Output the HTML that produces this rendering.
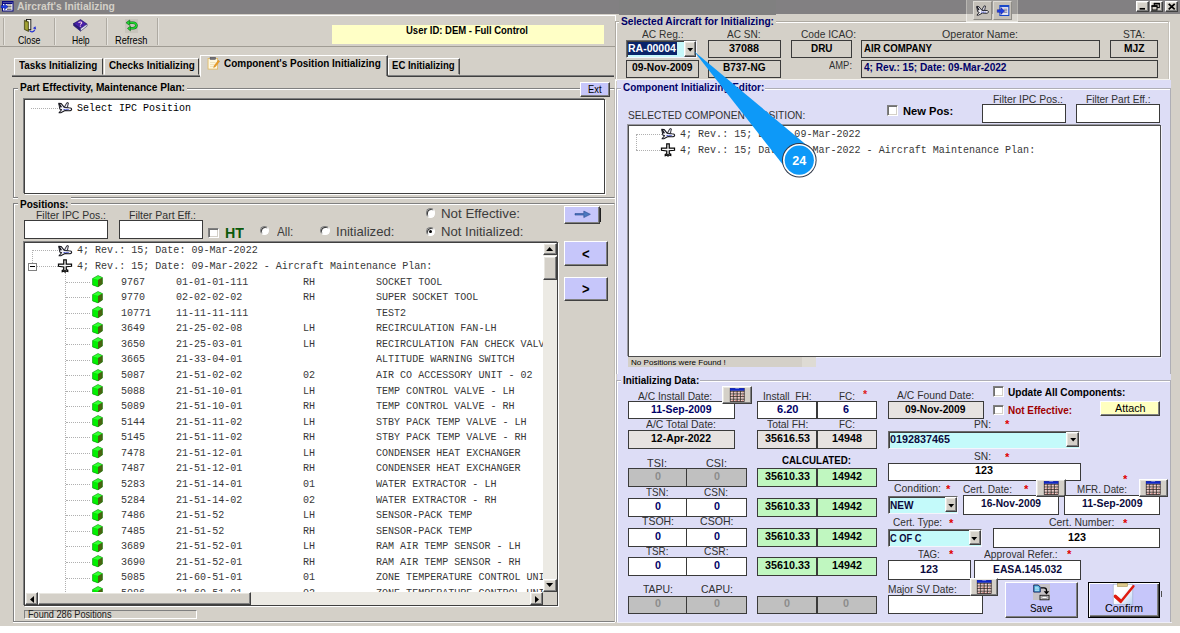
<!DOCTYPE html>
<html><head><meta charset="utf-8"><title>Aircraft's Initializing</title>
<style>
html,body{margin:0;padding:0;background:#fff;}
body{width:1180px;height:633px;overflow:hidden;position:relative;font-family:"Liberation Sans",sans-serif;font-size:10.2px;color:#000;}
#app{position:absolute;left:0;top:0;width:1180px;height:626.2px;background:#d4d0c8;overflow:hidden;}
.a{position:absolute;box-sizing:border-box;}
.t{position:absolute;white-space:pre;line-height:16px;height:16px;transform-origin:0 50%;}
.fld{border:1.2px solid #3a3a3a;}
.sunk{border:1px solid;border-color:#808080 #fff #fff #808080;}
.tree{background:#fff;border:1.3px solid #404040;box-shadow:-1px -1px 0 #808080, 1px 1px 0 #fff;}
.grp{border:1px solid #808080;box-shadow:1px 1px 0 #fff, inset 1px 1px 0 #fff;}
.btn{background:#c6c6fa;border:1px solid;border-color:#fff #404040 #404040 #fff;box-shadow:inset -1px -1px 0 #808080;}
.gbtn{background:#d4d0c8;border:1px solid;border-color:#fff #404040 #404040 #fff;box-shadow:inset -1px -1px 0 #808080, inset 1px 1px 0 #e8e6e0;}
.chk{background:#fff;border:1px solid;border-color:#808080 #fff #fff #808080;box-shadow:inset 1px 1px 0 #707070, inset -1px -1px 0 #d4d0c8;}
.rad{background:#fff;border-radius:50%;border:1px solid;border-color:#808080 #fff #fff #808080;box-shadow:inset 1px 1px 0 #404040;}
.dot{border-top:1px dotted #b0b0b0;height:0;}
.vdot{border-left:1px dotted #b0b0b0;width:0;}
svg{position:absolute;overflow:visible;}
.m{font-family:"Liberation Mono",monospace;font-size:10.04px;color:#383838;}
.cmb{border:1px solid;border-color:#6a6a6a #f4f4fc #f4f4fc #6a6a6a;box-shadow:inset 1px 1px 0 #404040;}

</style></head>
<body>
<div id="app">
<div class="a " style="left:0.0px;top:0.0px;width:1180.0px;height:14.2px;background:#828082;"></div>
<svg style="left:2px;top:1.3px" width="11.5" height="10.5" viewBox="0 0 23 21"><rect x="0" y="0" width="23" height="21" fill="#0a0a80"/><rect x="2" y="3" width="19" height="16" fill="#fff"/><rect x="2" y="3" width="19" height="3" fill="#0a0a80"/><path d="M10 8h9M10 11h9M10 14h9M10 17h9" stroke="#333" stroke-width="1.3"/><path d="M-2 9h7V5l7 6.5-7 6.5v-4h-7z" fill="#2040e0" stroke="#0a0a80" stroke-width="0.8"/></svg>
<div class="a gbtn" style="left:1136.2px;top:1.4px;width:12.6px;height:10.8px;"></div>
<div class="a gbtn" style="left:1149.8px;top:1.4px;width:12.8px;height:10.8px;"></div>
<div class="a gbtn" style="left:1165.4px;top:1.4px;width:12.9px;height:10.8px;"></div>
<svg style="left:1136.2px;top:1.4px" width="42" height="10.8" viewBox="0 0 42 10.8"><path d="M3.600 7.800h5.400" stroke="#000" stroke-width="1.700"/><rect x="18.300" y="2.400" width="5" height="4.200" fill="#d4d0c8" stroke="#000" stroke-width="1"/><path d="M17.800 2.700h6" stroke="#000" stroke-width="1.600"/><rect x="16" y="4.800" width="5" height="4.200" fill="#d4d0c8" stroke="#000" stroke-width="1"/><path d="M15.500 5.100h6" stroke="#000" stroke-width="1.600"/><path d="M32.700 2.800l6 5.600M38.700 2.800l-6 5.600" stroke="#000" stroke-width="1.700"/></svg>
<div class="a " style="left:0.0px;top:14.5px;width:614.5px;height:32.5px;background:#d4d0c8;border-top:1px solid #fff;border-bottom:1px solid #fff;"></div>
<div class="a " style="left:0.0px;top:45.6px;width:614.5px;height:1.0px;background:#a09c94;"></div>
<div class="a " style="left:3.2px;top:18.0px;width:1.0px;height:27.0px;background:#aeaaa2;"></div>
<div class="a " style="left:4.2px;top:18.0px;width:1.0px;height:27.0px;background:#e6e4df;"></div>
<div class="a " style="left:54.4px;top:18.0px;width:1.0px;height:27.0px;background:#aeaaa2;"></div>
<div class="a " style="left:55.4px;top:18.0px;width:1.0px;height:27.0px;background:#e6e4df;"></div>
<div class="a " style="left:105.8px;top:18.0px;width:1.0px;height:27.0px;background:#aeaaa2;"></div>
<div class="a " style="left:106.8px;top:18.0px;width:1.0px;height:27.0px;background:#e6e4df;"></div>
<div class="a " style="left:157.1px;top:18.0px;width:1.0px;height:27.0px;background:#aeaaa2;"></div>
<div class="a " style="left:158.1px;top:18.0px;width:1.0px;height:27.0px;background:#e6e4df;"></div>
<svg style="left:23.8px;top:18.9px" width="12.2" height="14.3" viewBox="0 0 25 29"><rect x="5" y="0.800" width="9" height="21" fill="#f8f8f0" stroke="#101010" stroke-width="1.800"/><path d="M0.800 2.500l8.500 3v20L0.800 21.500z" fill="#7c7c18" stroke="#2c2c08" stroke-width="1.200"/><path d="M2.500 5.500l5 2v15l-5-2z" fill="#a4a438"/><path d="M11.500 23.500c2.500 4 8.500 4 10.500-1.500" fill="none" stroke="#2430d0" stroke-width="2.400"/><path d="M18 19l5.500-4.500 1.500 7z" fill="#2430d0"/></svg>
<svg style="left:73px;top:19.3px" width="14.6" height="13.2" viewBox="0 0 29 26"><path d="M1 9L15 1l13 9-13 9z" fill="#4820a8" stroke="#18105c" stroke-width="1.2"/><path d="M1 9v4l14 11v-5z" fill="#2c1880" stroke="#18105c" stroke-width="1"/><path d="M15 19l13-9v4l-13 10z" fill="#e8e8f4" stroke="#18105c" stroke-width="1"/><path d="M11 7.5c1-2.5 6.5-2.5 6.5 0 0 2-2.600 2-2.800 3.800" fill="none" stroke="#ffd0e8" stroke-width="2"/><circle cx="14.600" cy="14" r="1.300" fill="#ffd0e8"/></svg>
<div class="a " style="left:124.7px;top:19.0px;width:13.6px;height:13.5px;background:#c8c4bc;"></div>
<svg style="left:125.3px;top:19.8px" width="12.4" height="11.4" viewBox="0 0 25 23"><path d="M8 5.5h8c5 0 7 3 7 5.500s-2 5.500-7 5.500h-5" fill="none" stroke="#106018" stroke-width="5.200" stroke-linecap="round"/><path d="M8 5.500h8c5 0 7 3 7 5.500s-2 5.500-7 5.500h-5" fill="none" stroke="#20d830" stroke-width="3" stroke-linecap="round"/><path d="M9.500 0L2 5.500l7.500 5.500z" fill="#20d830" stroke="#106018" stroke-width="1.200"/><path d="M11 12l-6 5 6 5z" fill="#20d830" stroke="#106018" stroke-width="1.200"/></svg>
<div class="a " style="left:331.7px;top:25.0px;width:272.3px;height:19.0px;background:#ffffc6;"></div>
<div class="a " style="left:12.2px;top:76.0px;width:602.3px;height:1.2px;background:#404040;"></div>
<div class="a " style="left:12.2px;top:75.0px;width:602.3px;height:1.0px;background:#808080;"></div>
<div class="a " style="left:14.2px;top:57.6px;width:89.2px;height:17.9px;background:#d4d0c8;border:1px solid;border-color:#fff #404040 transparent #fff;"></div>
<div class="a " style="left:103.6px;top:57.6px;width:95.9px;height:17.9px;background:#d4d0c8;border:1px solid;border-color:#fff #404040 transparent #fff;"></div>
<div class="a " style="left:388.0px;top:57.6px;width:71.5px;height:17.9px;background:#d4d0c8;border:1px solid;border-color:#fff #404040 transparent #fff;box-shadow:inset -1px 0 0 #808080"></div>
<div class="a " style="left:199.5px;top:55.3px;width:188.7px;height:22.1px;background:#d4d0c8;border:1px solid;border-color:#fff #404040 transparent #fff;box-shadow:inset -1px 0 0 #808080"></div>
<svg style="left:206.5px;top:57.2px" width="13.2" height="12.6" viewBox="0 0 26 25"><rect x="2" y="3" width="19" height="21" fill="#fff8e0" stroke="#e0b860" stroke-width="1.6"/><rect x="6" y="0.500" width="11" height="4.500" fill="#707078" stroke="#404048" stroke-width=".8"/><path d="M6 11h11M6 15h9M6 19h7" stroke="#e8d8a8" stroke-width="1.400"/><path d="M22.500 6.500l2.500 2-8.500 11-3.500 1.500 1-3.500z" fill="#f0a020" stroke="#c07818" stroke-width=".8"/></svg>
<div class="a " style="left:614.5px;top:15.0px;width:1.0px;height:607.0px;background:#fff;"></div>
<div class="a grp" style="left:12.6px;top:87.6px;width:602.2px;height:110.6px;border-right-color:#c0bcb4;box-shadow:0 1px 0 #fff, inset 1px 1px 0 #fff"></div>
<div class="a " style="left:17.5px;top:80.0px;width:169.0px;height:16.0px;background:#d4d0c8;"></div>
<div class="a tree" style="left:24.0px;top:99.4px;width:580.6px;height:94.3px;"></div>
<div class="a dot" style="left:31px;top:107.6px;width:27px"></div>
<svg style="left:57.5px;top:102px" width="14.2" height="11.4" viewBox="0 0 28 22"><path d="M1.500 2l4.500 .5 6.500 8 9 .5c4 0 5.500 1.500 5.500 3s-1.500 3-5.500 3l-7.500-.5-8.500 4.500-3.500 0 5-6-3.500-1.500z" fill="#f4f4fa" stroke="#181820" stroke-width="2" stroke-linejoin="round"/><path d="M12.500 10L17.500 1l3 .5-2 9.500z" fill="#e8e8f4" stroke="#181820" stroke-width="1.800" stroke-linejoin="round"/><path d="M2 2.500l4.500 8" stroke="#181820" stroke-width="3"/><path d="M11 14.500h11" stroke="#3848c8" stroke-width="2" stroke-dasharray="2.500 1.200"/></svg>
<div class="a btn" style="left:579.5px;top:81.5px;width:30.0px;height:15.5px;"></div>
<div class="a grp" style="left:12.6px;top:203.2px;width:602.2px;height:419.2px;border-right-color:#c0bcb4;box-shadow:inset 1px 1px 0 #fff, 0 1px 0 #fff;"></div>
<div class="a " style="left:17.5px;top:196.0px;width:53.5px;height:16.0px;background:#d4d0c8;"></div>
<div class="a fld" style="left:24.0px;top:220.0px;width:84.2px;height:18.5px;background:#fff;"></div>
<div class="a fld" style="left:118.5px;top:220.0px;width:84.7px;height:18.5px;background:#fff;"></div>
<div class="a chk" style="left:208.4px;top:227.8px;width:10.6px;height:10.6px;"></div>
<div class="a rad" style="left:259.8px;top:225.9px;width:9.6px;height:9.6px;"></div>
<div class="a rad" style="left:320.2px;top:225.9px;width:9.6px;height:9.6px;"></div>
<div class="a rad" style="left:425.9px;top:208.2px;width:9.6px;height:9.6px;"></div>
<div class="a rad" style="left:425.9px;top:226.6px;width:9.6px;height:9.6px;"></div>
<div class="a " style="left:429.1px;top:229.8px;width:3.2px;height:3.2px;background:#000;border-radius:50%"></div>
<div class="a btn" style="left:563.5px;top:206.0px;width:36.5px;height:18.0px;"></div>
<svg style="left:575.2px;top:211.3px" width="15.4" height="6.6" viewBox="0 0 14 6"><path d="M0 2.300h8V0L14 3 8 6V3.700H0z" fill="#4a78c0" stroke="#24448c" stroke-width=".5"/></svg>
<div class="a " style="left:600.2px;top:207.5px;width:1.2px;height:14.0px;background:#202020"></div>
<div class="a btn" style="left:563.5px;top:241.4px;width:44.5px;height:24.6px;"></div>
<div class="a btn" style="left:563.5px;top:277.0px;width:44.5px;height:24.4px;"></div>
<div class="a tree" style="left:24.0px;top:241.6px;width:533.6px;height:364.9px;"></div>
<div class="a " style="left:543.0px;top:242.6px;width:13.6px;height:349.6px;background:#eceae4;"></div>
<div class="a " style="left:25.0px;top:592.2px;width:518.0px;height:13.3px;background:#eceae4;"></div>
<div class="a " style="left:543.0px;top:592.2px;width:13.6px;height:13.3px;background:#d4d0c8;"></div>
<div class="a gbtn" style="left:543.0px;top:242.6px;width:13.6px;height:12.8px;"></div>
<div class="a gbtn" style="left:543.0px;top:255.6px;width:13.6px;height:24.2px;"></div>
<div class="a gbtn" style="left:543.0px;top:578.7px;width:13.6px;height:13.3px;"></div>
<div class="a gbtn" style="left:25.0px;top:592.2px;width:13.0px;height:13.3px;"></div>
<div class="a gbtn" style="left:38.0px;top:592.2px;width:212.6px;height:13.3px;"></div>
<div class="a gbtn" style="left:529.5px;top:592.2px;width:13.5px;height:13.3px;"></div>
<svg style="left:545.8px;top:246.8px" width="7.2" height="4" viewBox="0 0 7 4"><path d="M0 4h7L3.5 0z" fill="#000"/></svg>
<svg style="left:545.8px;top:583.3px" width="7.2" height="4" viewBox="0 0 7 4"><path d="M0 0h7L3.5 4z" fill="#000"/></svg>
<svg style="left:29.5px;top:595.5px" width="4" height="7" viewBox="0 0 4 7"><path d="M4 0v7L0 3.5z" fill="#000"/></svg>
<svg style="left:534.5px;top:595.5px" width="4" height="7" viewBox="0 0 4 7"><path d="M0 0v7L4 3.5z" fill="#000"/></svg>
<div class="a" style="left:25.3px;top:242.9px;width:517.7px;height:349.30000000000007px;overflow:hidden"><div class="a dot" style="left:6.699999999999999px;top:6.699999999999989px;width:26px"></div><div class="a vdot" style="left:6.699999999999999px;top:6.699999999999989px;height:13.5px"></div><div class="a dot" style="left:11.2px;top:23.299999999999983px;width:21.5px"></div><div class="a vdot" style="left:40.0px;top:29.099999999999994px;height:330px"></div><div class="a" style="left:3.0px;top:19.700000000000017px;width:8.3px;height:8.3px;border:1px solid #808080;background:#fff"></div><div class="a" style="left:5.099999999999998px;top:23.299999999999983px;width:4.2px;height:1px;background:#000"></div><svg style="left:32.5px;top:1.6999999999999886px" width="14.2" height="11.4" viewBox="0 0 28 22"><path d="M1.500 2l4.500 .5 6.500 8 9 .5c4 0 5.500 1.500 5.500 3s-1.500 3-5.500 3l-7.500-.5-8.500 4.500-3.500 0 5-6-3.500-1.500z" fill="#f4f4fa" stroke="#181820" stroke-width="2" stroke-linejoin="round"/><path d="M12.500 10L17.500 1l3 .5-2 9.500z" fill="#e8e8f4" stroke="#181820" stroke-width="1.800" stroke-linejoin="round"/><path d="M2 2.500l4.500 8" stroke="#181820" stroke-width="3"/><path d="M11 14.500h11" stroke="#3848c8" stroke-width="2" stroke-dasharray="2.500 1.200"/></svg><svg style="left:32.7px;top:15.900000000000006px" width="14" height="14" viewBox="0 0 28 28"><path d="M11.500 1.500h5v8.500l10.500 0 0 4.500-10.500 1v5.500l3 1.500v2.500L14 24l-5.500 1.500v-2.500l3-1.500v-5.500L1 14.500 1 10l10.500 0z" fill="#fafafa" stroke="#080808" stroke-width="2.500" stroke-linejoin="miter"/><path d="M14 22v5.500" stroke="#080808" stroke-width="2.400"/></svg><span class="t m" style="left:51.7px;top:0.6px;transform:scaleX(1.0005)">4; Rev.: 15; Date: 09-Mar-2022</span><span class="t m" style="left:51.7px;top:16.2px;transform:scaleX(1.0005)">4; Rev.: 15; Date: 09-Mar-2022 - Aircraft Maintenance Plan:</span><div class="a dot" style="left:40.7px;top:38.9px;width:24.5px"></div><svg style="left:66.7px;top:32.2px" width="11" height="12.4" viewBox="0 0 22 25"><path d="M1 7l11-6 9 4v13l-9 6-11-4z" fill="#08e808" /><path d="M1 7l11-6 9 4-9 5z" fill="#30ff30"/><path d="M12 10l9-5v13l-9 6z" fill="#4a6410"/><path d="M1 7l11 3v14l-11-4z" fill="#00f000"/><path d="M1 7l11-6 9 4v13l-9 6-11-4z" fill="none" stroke="#206020" stroke-width="0.8"/></svg><span class="t m" style="left:95.9px;top:31.7px;transform:scaleX(1.0005)">9767</span><span class="t m" style="left:150.7px;top:31.7px;transform:scaleX(1.0005)">01-01-01-111</span><span class="t m" style="left:277.7px;top:31.7px;transform:scaleX(1.0005)">RH</span><span class="t m" style="left:350.3px;top:31.7px;transform:scaleX(1.0005)">SOCKET TOOL</span><div class="a dot" style="left:40.7px;top:54.5px;width:24.5px"></div><svg style="left:66.7px;top:47.8px" width="11" height="12.4" viewBox="0 0 22 25"><path d="M1 7l11-6 9 4v13l-9 6-11-4z" fill="#08e808" /><path d="M1 7l11-6 9 4-9 5z" fill="#30ff30"/><path d="M12 10l9-5v13l-9 6z" fill="#4a6410"/><path d="M1 7l11 3v14l-11-4z" fill="#00f000"/><path d="M1 7l11-6 9 4v13l-9 6-11-4z" fill="none" stroke="#206020" stroke-width="0.8"/></svg><span class="t m" style="left:95.9px;top:47.3px;transform:scaleX(1.0005)">9770</span><span class="t m" style="left:150.7px;top:47.3px;transform:scaleX(1.0005)">02-02-02-02</span><span class="t m" style="left:277.7px;top:47.3px;transform:scaleX(1.0005)">RH</span><span class="t m" style="left:350.3px;top:47.3px;transform:scaleX(1.0005)">SUPER SOCKET TOOL</span><div class="a dot" style="left:40.7px;top:70.1px;width:24.5px"></div><svg style="left:66.7px;top:63.4px" width="11" height="12.4" viewBox="0 0 22 25"><path d="M1 7l11-6 9 4v13l-9 6-11-4z" fill="#08e808" /><path d="M1 7l11-6 9 4-9 5z" fill="#30ff30"/><path d="M12 10l9-5v13l-9 6z" fill="#4a6410"/><path d="M1 7l11 3v14l-11-4z" fill="#00f000"/><path d="M1 7l11-6 9 4v13l-9 6-11-4z" fill="none" stroke="#206020" stroke-width="0.8"/></svg><span class="t m" style="left:95.9px;top:62.9px;transform:scaleX(1.0005)">10771</span><span class="t m" style="left:150.7px;top:62.9px;transform:scaleX(1.0005)">11-11-11-111</span><span class="t m" style="left:350.3px;top:62.9px;transform:scaleX(1.0005)">TEST2</span><div class="a dot" style="left:40.7px;top:85.6px;width:24.5px"></div><svg style="left:66.7px;top:78.9px" width="11" height="12.4" viewBox="0 0 22 25"><path d="M1 7l11-6 9 4v13l-9 6-11-4z" fill="#08e808" /><path d="M1 7l11-6 9 4-9 5z" fill="#30ff30"/><path d="M12 10l9-5v13l-9 6z" fill="#4a6410"/><path d="M1 7l11 3v14l-11-4z" fill="#00f000"/><path d="M1 7l11-6 9 4v13l-9 6-11-4z" fill="none" stroke="#206020" stroke-width="0.8"/></svg><span class="t m" style="left:95.9px;top:78.4px;transform:scaleX(1.0005)">3649</span><span class="t m" style="left:150.7px;top:78.4px;transform:scaleX(1.0005)">21-25-02-08</span><span class="t m" style="left:277.7px;top:78.4px;transform:scaleX(1.0005)">LH</span><span class="t m" style="left:350.3px;top:78.4px;transform:scaleX(1.0005)">RECIRCULATION FAN-LH</span><div class="a dot" style="left:40.7px;top:101.2px;width:24.5px"></div><svg style="left:66.7px;top:94.5px" width="11" height="12.4" viewBox="0 0 22 25"><path d="M1 7l11-6 9 4v13l-9 6-11-4z" fill="#08e808" /><path d="M1 7l11-6 9 4-9 5z" fill="#30ff30"/><path d="M12 10l9-5v13l-9 6z" fill="#4a6410"/><path d="M1 7l11 3v14l-11-4z" fill="#00f000"/><path d="M1 7l11-6 9 4v13l-9 6-11-4z" fill="none" stroke="#206020" stroke-width="0.8"/></svg><span class="t m" style="left:95.9px;top:94.0px;transform:scaleX(1.0005)">3650</span><span class="t m" style="left:150.7px;top:94.0px;transform:scaleX(1.0005)">21-25-03-01</span><span class="t m" style="left:277.7px;top:94.0px;transform:scaleX(1.0005)">LH</span><span class="t m" style="left:350.3px;top:94.0px;transform:scaleX(1.0005)">RECIRCULATION FAN CHECK VALVE</span><div class="a dot" style="left:40.7px;top:116.8px;width:24.5px"></div><svg style="left:66.7px;top:110.1px" width="11" height="12.4" viewBox="0 0 22 25"><path d="M1 7l11-6 9 4v13l-9 6-11-4z" fill="#08e808" /><path d="M1 7l11-6 9 4-9 5z" fill="#30ff30"/><path d="M12 10l9-5v13l-9 6z" fill="#4a6410"/><path d="M1 7l11 3v14l-11-4z" fill="#00f000"/><path d="M1 7l11-6 9 4v13l-9 6-11-4z" fill="none" stroke="#206020" stroke-width="0.8"/></svg><span class="t m" style="left:95.9px;top:109.6px;transform:scaleX(1.0005)">3665</span><span class="t m" style="left:150.7px;top:109.6px;transform:scaleX(1.0005)">21-33-04-01</span><span class="t m" style="left:350.3px;top:109.6px;transform:scaleX(1.0005)">ALTITUDE WARNING SWITCH</span><div class="a dot" style="left:40.7px;top:132.4px;width:24.5px"></div><svg style="left:66.7px;top:125.7px" width="11" height="12.4" viewBox="0 0 22 25"><path d="M1 7l11-6 9 4v13l-9 6-11-4z" fill="#08e808" /><path d="M1 7l11-6 9 4-9 5z" fill="#30ff30"/><path d="M12 10l9-5v13l-9 6z" fill="#4a6410"/><path d="M1 7l11 3v14l-11-4z" fill="#00f000"/><path d="M1 7l11-6 9 4v13l-9 6-11-4z" fill="none" stroke="#206020" stroke-width="0.8"/></svg><span class="t m" style="left:95.9px;top:125.2px;transform:scaleX(1.0005)">5087</span><span class="t m" style="left:150.7px;top:125.2px;transform:scaleX(1.0005)">21-51-02-02</span><span class="t m" style="left:277.7px;top:125.2px;transform:scaleX(1.0005)">02</span><span class="t m" style="left:350.3px;top:125.2px;transform:scaleX(1.0005)">AIR CO ACCESSORY UNIT - 02</span><div class="a dot" style="left:40.7px;top:147.9px;width:24.5px"></div><svg style="left:66.7px;top:141.2px" width="11" height="12.4" viewBox="0 0 22 25"><path d="M1 7l11-6 9 4v13l-9 6-11-4z" fill="#08e808" /><path d="M1 7l11-6 9 4-9 5z" fill="#30ff30"/><path d="M12 10l9-5v13l-9 6z" fill="#4a6410"/><path d="M1 7l11 3v14l-11-4z" fill="#00f000"/><path d="M1 7l11-6 9 4v13l-9 6-11-4z" fill="none" stroke="#206020" stroke-width="0.8"/></svg><span class="t m" style="left:95.9px;top:140.7px;transform:scaleX(1.0005)">5088</span><span class="t m" style="left:150.7px;top:140.7px;transform:scaleX(1.0005)">21-51-10-01</span><span class="t m" style="left:277.7px;top:140.7px;transform:scaleX(1.0005)">LH</span><span class="t m" style="left:350.3px;top:140.7px;transform:scaleX(1.0005)">TEMP CONTROL VALVE - LH</span><div class="a dot" style="left:40.7px;top:163.5px;width:24.5px"></div><svg style="left:66.7px;top:156.8px" width="11" height="12.4" viewBox="0 0 22 25"><path d="M1 7l11-6 9 4v13l-9 6-11-4z" fill="#08e808" /><path d="M1 7l11-6 9 4-9 5z" fill="#30ff30"/><path d="M12 10l9-5v13l-9 6z" fill="#4a6410"/><path d="M1 7l11 3v14l-11-4z" fill="#00f000"/><path d="M1 7l11-6 9 4v13l-9 6-11-4z" fill="none" stroke="#206020" stroke-width="0.8"/></svg><span class="t m" style="left:95.9px;top:156.3px;transform:scaleX(1.0005)">5089</span><span class="t m" style="left:150.7px;top:156.3px;transform:scaleX(1.0005)">21-51-10-01</span><span class="t m" style="left:277.7px;top:156.3px;transform:scaleX(1.0005)">RH</span><span class="t m" style="left:350.3px;top:156.3px;transform:scaleX(1.0005)">TEMP CONTROL VALVE - RH</span><div class="a dot" style="left:40.7px;top:179.1px;width:24.5px"></div><svg style="left:66.7px;top:172.4px" width="11" height="12.4" viewBox="0 0 22 25"><path d="M1 7l11-6 9 4v13l-9 6-11-4z" fill="#08e808" /><path d="M1 7l11-6 9 4-9 5z" fill="#30ff30"/><path d="M12 10l9-5v13l-9 6z" fill="#4a6410"/><path d="M1 7l11 3v14l-11-4z" fill="#00f000"/><path d="M1 7l11-6 9 4v13l-9 6-11-4z" fill="none" stroke="#206020" stroke-width="0.8"/></svg><span class="t m" style="left:95.9px;top:171.9px;transform:scaleX(1.0005)">5144</span><span class="t m" style="left:150.7px;top:171.9px;transform:scaleX(1.0005)">21-51-11-02</span><span class="t m" style="left:277.7px;top:171.9px;transform:scaleX(1.0005)">LH</span><span class="t m" style="left:350.3px;top:171.9px;transform:scaleX(1.0005)">STBY PACK TEMP VALVE - LH</span><div class="a dot" style="left:40.7px;top:194.6px;width:24.5px"></div><svg style="left:66.7px;top:187.9px" width="11" height="12.4" viewBox="0 0 22 25"><path d="M1 7l11-6 9 4v13l-9 6-11-4z" fill="#08e808" /><path d="M1 7l11-6 9 4-9 5z" fill="#30ff30"/><path d="M12 10l9-5v13l-9 6z" fill="#4a6410"/><path d="M1 7l11 3v14l-11-4z" fill="#00f000"/><path d="M1 7l11-6 9 4v13l-9 6-11-4z" fill="none" stroke="#206020" stroke-width="0.8"/></svg><span class="t m" style="left:95.9px;top:187.4px;transform:scaleX(1.0005)">5145</span><span class="t m" style="left:150.7px;top:187.4px;transform:scaleX(1.0005)">21-51-11-02</span><span class="t m" style="left:277.7px;top:187.4px;transform:scaleX(1.0005)">RH</span><span class="t m" style="left:350.3px;top:187.4px;transform:scaleX(1.0005)">STBY PACK TEMP VALVE - RH</span><div class="a dot" style="left:40.7px;top:210.2px;width:24.5px"></div><svg style="left:66.7px;top:203.5px" width="11" height="12.4" viewBox="0 0 22 25"><path d="M1 7l11-6 9 4v13l-9 6-11-4z" fill="#08e808" /><path d="M1 7l11-6 9 4-9 5z" fill="#30ff30"/><path d="M12 10l9-5v13l-9 6z" fill="#4a6410"/><path d="M1 7l11 3v14l-11-4z" fill="#00f000"/><path d="M1 7l11-6 9 4v13l-9 6-11-4z" fill="none" stroke="#206020" stroke-width="0.8"/></svg><span class="t m" style="left:95.9px;top:203.0px;transform:scaleX(1.0005)">7478</span><span class="t m" style="left:150.7px;top:203.0px;transform:scaleX(1.0005)">21-51-12-01</span><span class="t m" style="left:277.7px;top:203.0px;transform:scaleX(1.0005)">LH</span><span class="t m" style="left:350.3px;top:203.0px;transform:scaleX(1.0005)">CONDENSER HEAT EXCHANGER</span><div class="a dot" style="left:40.7px;top:225.8px;width:24.5px"></div><svg style="left:66.7px;top:219.1px" width="11" height="12.4" viewBox="0 0 22 25"><path d="M1 7l11-6 9 4v13l-9 6-11-4z" fill="#08e808" /><path d="M1 7l11-6 9 4-9 5z" fill="#30ff30"/><path d="M12 10l9-5v13l-9 6z" fill="#4a6410"/><path d="M1 7l11 3v14l-11-4z" fill="#00f000"/><path d="M1 7l11-6 9 4v13l-9 6-11-4z" fill="none" stroke="#206020" stroke-width="0.8"/></svg><span class="t m" style="left:95.9px;top:218.6px;transform:scaleX(1.0005)">7487</span><span class="t m" style="left:150.7px;top:218.6px;transform:scaleX(1.0005)">21-51-12-01</span><span class="t m" style="left:277.7px;top:218.6px;transform:scaleX(1.0005)">RH</span><span class="t m" style="left:350.3px;top:218.6px;transform:scaleX(1.0005)">CONDENSER HEAT EXCHANGER</span><div class="a dot" style="left:40.7px;top:241.4px;width:24.5px"></div><svg style="left:66.7px;top:234.7px" width="11" height="12.4" viewBox="0 0 22 25"><path d="M1 7l11-6 9 4v13l-9 6-11-4z" fill="#08e808" /><path d="M1 7l11-6 9 4-9 5z" fill="#30ff30"/><path d="M12 10l9-5v13l-9 6z" fill="#4a6410"/><path d="M1 7l11 3v14l-11-4z" fill="#00f000"/><path d="M1 7l11-6 9 4v13l-9 6-11-4z" fill="none" stroke="#206020" stroke-width="0.8"/></svg><span class="t m" style="left:95.9px;top:234.2px;transform:scaleX(1.0005)">5283</span><span class="t m" style="left:150.7px;top:234.2px;transform:scaleX(1.0005)">21-51-14-01</span><span class="t m" style="left:277.7px;top:234.2px;transform:scaleX(1.0005)">01</span><span class="t m" style="left:350.3px;top:234.2px;transform:scaleX(1.0005)">WATER EXTRACTOR - LH</span><div class="a dot" style="left:40.7px;top:256.9px;width:24.5px"></div><svg style="left:66.7px;top:250.2px" width="11" height="12.4" viewBox="0 0 22 25"><path d="M1 7l11-6 9 4v13l-9 6-11-4z" fill="#08e808" /><path d="M1 7l11-6 9 4-9 5z" fill="#30ff30"/><path d="M12 10l9-5v13l-9 6z" fill="#4a6410"/><path d="M1 7l11 3v14l-11-4z" fill="#00f000"/><path d="M1 7l11-6 9 4v13l-9 6-11-4z" fill="none" stroke="#206020" stroke-width="0.8"/></svg><span class="t m" style="left:95.9px;top:249.7px;transform:scaleX(1.0005)">5284</span><span class="t m" style="left:150.7px;top:249.7px;transform:scaleX(1.0005)">21-51-14-02</span><span class="t m" style="left:277.7px;top:249.7px;transform:scaleX(1.0005)">02</span><span class="t m" style="left:350.3px;top:249.7px;transform:scaleX(1.0005)">WATER EXTRACTOR - RH</span><div class="a dot" style="left:40.7px;top:272.5px;width:24.5px"></div><svg style="left:66.7px;top:265.8px" width="11" height="12.4" viewBox="0 0 22 25"><path d="M1 7l11-6 9 4v13l-9 6-11-4z" fill="#08e808" /><path d="M1 7l11-6 9 4-9 5z" fill="#30ff30"/><path d="M12 10l9-5v13l-9 6z" fill="#4a6410"/><path d="M1 7l11 3v14l-11-4z" fill="#00f000"/><path d="M1 7l11-6 9 4v13l-9 6-11-4z" fill="none" stroke="#206020" stroke-width="0.8"/></svg><span class="t m" style="left:95.9px;top:265.3px;transform:scaleX(1.0005)">7486</span><span class="t m" style="left:150.7px;top:265.3px;transform:scaleX(1.0005)">21-51-52</span><span class="t m" style="left:277.7px;top:265.3px;transform:scaleX(1.0005)">LH</span><span class="t m" style="left:350.3px;top:265.3px;transform:scaleX(1.0005)">SENSOR-PACK TEMP</span><div class="a dot" style="left:40.7px;top:288.1px;width:24.5px"></div><svg style="left:66.7px;top:281.4px" width="11" height="12.4" viewBox="0 0 22 25"><path d="M1 7l11-6 9 4v13l-9 6-11-4z" fill="#08e808" /><path d="M1 7l11-6 9 4-9 5z" fill="#30ff30"/><path d="M12 10l9-5v13l-9 6z" fill="#4a6410"/><path d="M1 7l11 3v14l-11-4z" fill="#00f000"/><path d="M1 7l11-6 9 4v13l-9 6-11-4z" fill="none" stroke="#206020" stroke-width="0.8"/></svg><span class="t m" style="left:95.9px;top:280.9px;transform:scaleX(1.0005)">7485</span><span class="t m" style="left:150.7px;top:280.9px;transform:scaleX(1.0005)">21-51-52</span><span class="t m" style="left:277.7px;top:280.9px;transform:scaleX(1.0005)">RH</span><span class="t m" style="left:350.3px;top:280.9px;transform:scaleX(1.0005)">SENSOR-PACK TEMP</span><div class="a dot" style="left:40.7px;top:303.6px;width:24.5px"></div><svg style="left:66.7px;top:296.9px" width="11" height="12.4" viewBox="0 0 22 25"><path d="M1 7l11-6 9 4v13l-9 6-11-4z" fill="#08e808" /><path d="M1 7l11-6 9 4-9 5z" fill="#30ff30"/><path d="M12 10l9-5v13l-9 6z" fill="#4a6410"/><path d="M1 7l11 3v14l-11-4z" fill="#00f000"/><path d="M1 7l11-6 9 4v13l-9 6-11-4z" fill="none" stroke="#206020" stroke-width="0.8"/></svg><span class="t m" style="left:95.9px;top:296.4px;transform:scaleX(1.0005)">3689</span><span class="t m" style="left:150.7px;top:296.4px;transform:scaleX(1.0005)">21-51-52-01</span><span class="t m" style="left:277.7px;top:296.4px;transform:scaleX(1.0005)">LH</span><span class="t m" style="left:350.3px;top:296.4px;transform:scaleX(1.0005)">RAM AIR TEMP SENSOR - LH</span><div class="a dot" style="left:40.7px;top:319.2px;width:24.5px"></div><svg style="left:66.7px;top:312.5px" width="11" height="12.4" viewBox="0 0 22 25"><path d="M1 7l11-6 9 4v13l-9 6-11-4z" fill="#08e808" /><path d="M1 7l11-6 9 4-9 5z" fill="#30ff30"/><path d="M12 10l9-5v13l-9 6z" fill="#4a6410"/><path d="M1 7l11 3v14l-11-4z" fill="#00f000"/><path d="M1 7l11-6 9 4v13l-9 6-11-4z" fill="none" stroke="#206020" stroke-width="0.8"/></svg><span class="t m" style="left:95.9px;top:312.0px;transform:scaleX(1.0005)">3690</span><span class="t m" style="left:150.7px;top:312.0px;transform:scaleX(1.0005)">21-51-52-01</span><span class="t m" style="left:277.7px;top:312.0px;transform:scaleX(1.0005)">RH</span><span class="t m" style="left:350.3px;top:312.0px;transform:scaleX(1.0005)">RAM AIR TEMP SENSOR - RH</span><div class="a dot" style="left:40.7px;top:334.8px;width:24.5px"></div><svg style="left:66.7px;top:328.1px" width="11" height="12.4" viewBox="0 0 22 25"><path d="M1 7l11-6 9 4v13l-9 6-11-4z" fill="#08e808" /><path d="M1 7l11-6 9 4-9 5z" fill="#30ff30"/><path d="M12 10l9-5v13l-9 6z" fill="#4a6410"/><path d="M1 7l11 3v14l-11-4z" fill="#00f000"/><path d="M1 7l11-6 9 4v13l-9 6-11-4z" fill="none" stroke="#206020" stroke-width="0.8"/></svg><span class="t m" style="left:95.9px;top:327.6px;transform:scaleX(1.0005)">5085</span><span class="t m" style="left:150.7px;top:327.6px;transform:scaleX(1.0005)">21-60-51-01</span><span class="t m" style="left:277.7px;top:327.6px;transform:scaleX(1.0005)">01</span><span class="t m" style="left:350.3px;top:327.6px;transform:scaleX(1.0005)">ZONE TEMPERATURE CONTROL UNIT</span><div class="a dot" style="left:40.7px;top:350.3px;width:24.5px"></div><svg style="left:66.7px;top:343.6px" width="11" height="12.4" viewBox="0 0 22 25"><path d="M1 7l11-6 9 4v13l-9 6-11-4z" fill="#08e808" /><path d="M1 7l11-6 9 4-9 5z" fill="#30ff30"/><path d="M12 10l9-5v13l-9 6z" fill="#4a6410"/><path d="M1 7l11 3v14l-11-4z" fill="#00f000"/><path d="M1 7l11-6 9 4v13l-9 6-11-4z" fill="none" stroke="#206020" stroke-width="0.8"/></svg><span class="t m" style="left:95.9px;top:343.1px;transform:scaleX(1.0005)">5086</span><span class="t m" style="left:150.7px;top:343.1px;transform:scaleX(1.0005)">21-60-51-01</span><span class="t m" style="left:277.7px;top:343.1px;transform:scaleX(1.0005)">02</span><span class="t m" style="left:350.3px;top:343.1px;transform:scaleX(1.0005)">ZONE TEMPERATURE CONTROL UNIT</span></div>
<div class="a sunk" style="left:24.0px;top:609.6px;width:173.0px;height:9.6px;"></div>
<div class="a grp" style="left:614.5px;top:21.4px;width:554.5px;height:59.1px;border-bottom:none;border-color:#aeaaa2;border-right-color:#c4c0b8"></div>
<div class="a " style="left:619.0px;top:14.6px;width:157.0px;height:14.9px;background:#d4d0c8;"></div>
<div class="a " style="left:619.0px;top:0.0px;width:157.0px;height:14.5px;background:#808080;"></div>
<div class="a " style="left:965.7px;top:0.0px;width:51.9px;height:14.2px;background:#9c9a98;border-left:1px solid #b8b6b2;border-right:1px solid #b0aeaa;"></div>
<div class="a " style="left:965.7px;top:14.2px;width:51.9px;height:7.4px;background:#d8d5ce;border-left:1px solid #eceae6;border-right:1px solid #e4e2dc;border-bottom:1px solid #e8e6e0"></div>
<div class="a " style="left:973.4px;top:1.0px;width:18.6px;height:18.5px;background:#c4c0b8;border:1px solid;border-color:#dedcd6 #8e8c86 #8e8c86 #dedcd6"></div>
<div class="a " style="left:993.3px;top:1.0px;width:19.1px;height:18.5px;background:#c4c0b8;border:1px solid;border-color:#dedcd6 #8e8c86 #8e8c86 #dedcd6"></div>
<svg style="left:976px;top:5px" width="13" height="11" viewBox="0 0 28 22"><path d="M1.500 2l4.500 .5 6.500 8 9 .5c4 0 5.500 1.500 5.500 3s-1.500 3-5.500 3l-7.500-.5-8.500 4.500-3.500 0 5-6-3.500-1.500z" fill="#f4f4fa" stroke="#181820" stroke-width="2" stroke-linejoin="round"/><path d="M12.500 10L17.500 1l3 .5-2 9.500z" fill="#e8e8f4" stroke="#181820" stroke-width="1.800" stroke-linejoin="round"/><path d="M2 2.500l4.500 8" stroke="#181820" stroke-width="3"/><path d="M11 14.500h11" stroke="#3848c8" stroke-width="2" stroke-dasharray="2.500 1.200"/></svg>
<svg style="left:996.6px;top:5px" width="12.6" height="11" viewBox="0 0 23 21"><rect x="4" y="0" width="19" height="21" fill="#1848c8"/><rect x="6" y="4" width="15" height="15" fill="#e8e8f4"/><path d="M12 8h7M12 11h7M12 14h7" stroke="#557" stroke-width="1.3"/><path d="M0 9h7V5l7 6.5-7 6.5v-4H0z" fill="#2040e0" stroke="#0a0a80" stroke-width="0.8"/></svg>
<div class="a cmb" style="left:626.2px;top:40.0px;width:70.6px;height:18.0px;background:#c6f8fa;"></div>
<div class="a " style="left:627.6px;top:42.2px;width:49.2px;height:12.8px;background:#0a246a;"></div>
<div class="a gbtn" style="left:683.8px;top:41.2px;width:12.4px;height:15.6px;"></div>
<svg style="left:686.8px;top:47.8px" width="6.4" height="3.4" viewBox="0 0 7 4"><path d="M0 0h7L3.5 4z" fill="#000"/></svg>
<div class="a fld" style="left:708.3px;top:40.0px;width:72.4px;height:18.0px;background:#d4d0c8;"></div>
<div class="a fld" style="left:791.0px;top:40.0px;width:61.0px;height:18.0px;background:#d4d0c8;"></div>
<div class="a fld" style="left:861.0px;top:40.0px;width:238.6px;height:18.0px;background:#d4d0c8;"></div>
<div class="a fld" style="left:1110.0px;top:40.0px;width:48.2px;height:18.0px;background:#d4d0c8;"></div>
<div class="a fld" style="left:626.2px;top:60.2px;width:72.5px;height:18.0px;background:#d4d0c8;"></div>
<div class="a fld" style="left:708.3px;top:60.2px;width:72.4px;height:18.0px;background:#d4d0c8;"></div>
<div class="a fld" style="left:861.0px;top:60.2px;width:297.2px;height:18.0px;background:#d4d0c8;"></div>
<div class="a " style="left:617.0px;top:80.3px;width:554.0px;height:295.7px;background:#ddddf6;"></div>
<div class="a " style="left:614.5px;top:79.3px;width:555.5px;height:1.0px;background:#f4f2ee;"></div>
<div class="a " style="left:617.0px;top:376.0px;width:554.0px;height:246.0px;background:#ddddf6;"></div>
<div class="a grp" style="left:616.4px;top:88.0px;width:554.2px;height:286.0px;border-bottom:none;border-color:#aeaeb6;box-shadow:inset 1px 1px 0 #fff, 1px 0 0 #e4e2de"></div>
<div class="a " style="left:621.0px;top:81.0px;width:144.0px;height:15.0px;background:#ddddf6;"></div>
<div class="a chk" style="left:887.4px;top:105.2px;width:10.6px;height:10.6px;"></div>
<div class="a fld" style="left:981.7px;top:104.0px;width:84.1px;height:18.6px;background:#fff;"></div>
<div class="a fld" style="left:1075.8px;top:104.0px;width:84.7px;height:18.6px;background:#fff;"></div>
<div class="a tree" style="left:627.7px;top:125.2px;width:533.6px;height:231.8px;border-color:#4c4c4c;border-width:1px;box-shadow:-1px -1px 0 #9a9aa2, 1px 1px 0 #f0f0fa"></div>
<div class="a dot" style="left:635.5px;top:133.8px;width:26px"></div>
<div class="a vdot" style="left:635.5px;top:133.8px;height:16.5px"></div>
<div class="a dot" style="left:635.5px;top:150.2px;width:26px"></div>
<svg style="left:661px;top:128.3px" width="14.2" height="11.4" viewBox="0 0 28 22"><path d="M1.500 2l4.500 .5 6.500 8 9 .5c4 0 5.500 1.500 5.500 3s-1.500 3-5.500 3l-7.500-.5-8.500 4.500-3.500 0 5-6-3.500-1.500z" fill="#f4f4fa" stroke="#181820" stroke-width="2" stroke-linejoin="round"/><path d="M12.500 10L17.500 1l3 .5-2 9.500z" fill="#e8e8f4" stroke="#181820" stroke-width="1.800" stroke-linejoin="round"/><path d="M2 2.500l4.500 8" stroke="#181820" stroke-width="3"/><path d="M11 14.500h11" stroke="#3848c8" stroke-width="2" stroke-dasharray="2.500 1.200"/></svg>
<svg style="left:661.3px;top:142.7px" width="14" height="14" viewBox="0 0 28 28"><path d="M11.500 1.500h5v8.500l10.500 0 0 4.500-10.500 1v5.500l3 1.500v2.500L14 24l-5.500 1.500v-2.500l3-1.500v-5.500L1 14.500 1 10l10.500 0z" fill="#fafafa" stroke="#080808" stroke-width="2.500" stroke-linejoin="miter"/><path d="M14 22v5.500" stroke="#080808" stroke-width="2.400"/></svg>
<span class="t m" style="left:680px;top:127.29999999999998px">4; Rev.: 15; Date: 09-Mar-2022</span>
<span class="t m" style="left:680px;top:143.1px">4; Rev.: 15; Date: 09-Mar-2022 - Aircraft Maintenance Plan:</span>
<div class="a " style="left:627.7px;top:357.3px;width:174.1px;height:9.9px;background:#d4d0c8;"></div>
<div class="a " style="left:801.8px;top:357.3px;width:14.2px;height:9.9px;background:#dedbd4;"></div>
<div class="a grp" style="left:616.2px;top:380.0px;width:554.4px;height:241.5px;border-bottom:none;border-color:#aeaeb6;box-shadow:inset 1px 1px 0 #fff, 1px 0 0 #e4e2de"></div>
<div class="a " style="left:620.5px;top:372.0px;width:79.5px;height:16.0px;background:#ddddf6;"></div>
<div class="a fld" style="left:627.7px;top:401.4px;width:107.1px;height:18.1px;background:#fff;"></div>
<div class="a gbtn" style="left:722.3px;top:385.5px;width:29.5px;height:18.9px;"></div>
<svg style="left:729.6px;top:387.6px" width="14.4" height="13.800" viewBox="0 0 30 28"><rect x="0.500" y="0.500" width="29" height="27" fill="#fbf8f4" stroke="#281818" stroke-width="1.600"/><rect x="0" y="0" width="30" height="5.500" fill="#1028c8"/><rect x="11" y="0" width="8" height="1.600" fill="#8090e8"/><path d="M2 9.500h26M2 15h26M2 20.500h26M2 25.500h26" stroke="#d05048" stroke-width="2.200" stroke-dasharray="4.500 2.800" stroke-dashoffset="-1" opacity=".55"/><path d="M0 6.500h30M0 12h30M0 17.500h30M0 23h30M7.800 6v22M15 6v22M22.200 6v22" stroke="#30201c" stroke-width="1.700"/></svg>
<div class="a fld" style="left:757.4px;top:401.4px;width:60.1px;height:18.1px;background:#fff;"></div>
<div class="a fld" style="left:816.5px;top:401.4px;width:60.3px;height:18.1px;background:#fff;"></div>
<div class="a fld" style="left:627.7px;top:430.2px;width:107.1px;height:18.6px;background:#e6e2e0;"></div>
<div class="a fld" style="left:757.4px;top:430.2px;width:60.1px;height:18.6px;background:#e6e2e0;"></div>
<div class="a fld" style="left:816.5px;top:430.2px;width:60.3px;height:18.6px;background:#e6e2e0;"></div>
<div class="a fld" style="left:627.7px;top:468.4px;width:59.6px;height:18.3px;background:#c0c0c0;"></div>
<div class="a fld" style="left:686.3px;top:468.4px;width:60.3px;height:18.3px;background:#c0c0c0;"></div>
<div class="a fld" style="left:757.4px;top:468.4px;width:60.1px;height:18.3px;background:#c0f7c0;"></div>
<div class="a fld" style="left:816.5px;top:468.4px;width:60.3px;height:18.3px;background:#c0f7c0;"></div>
<div class="a fld" style="left:627.7px;top:498.0px;width:59.6px;height:18.7px;background:#fff;"></div>
<div class="a fld" style="left:686.3px;top:498.0px;width:60.3px;height:18.7px;background:#fff;"></div>
<div class="a fld" style="left:757.4px;top:498.0px;width:60.1px;height:18.7px;background:#c0f7c0;"></div>
<div class="a fld" style="left:816.5px;top:498.0px;width:60.3px;height:18.7px;background:#c0f7c0;"></div>
<div class="a fld" style="left:627.7px;top:528.4px;width:59.6px;height:18.3px;background:#fff;"></div>
<div class="a fld" style="left:686.3px;top:528.4px;width:60.3px;height:18.3px;background:#fff;"></div>
<div class="a fld" style="left:757.4px;top:528.4px;width:60.1px;height:18.3px;background:#c0f7c0;"></div>
<div class="a fld" style="left:816.5px;top:528.4px;width:60.3px;height:18.3px;background:#c0f7c0;"></div>
<div class="a fld" style="left:627.7px;top:556.7px;width:59.6px;height:18.9px;background:#fff;"></div>
<div class="a fld" style="left:686.3px;top:556.7px;width:60.3px;height:18.9px;background:#fff;"></div>
<div class="a fld" style="left:757.4px;top:556.7px;width:60.1px;height:18.9px;background:#c0f7c0;"></div>
<div class="a fld" style="left:816.5px;top:556.7px;width:60.3px;height:18.9px;background:#c0f7c0;"></div>
<div class="a fld" style="left:627.7px;top:595.5px;width:59.6px;height:18.3px;background:#c0c0c0;"></div>
<div class="a fld" style="left:686.3px;top:595.5px;width:60.3px;height:18.3px;background:#c0c0c0;"></div>
<div class="a fld" style="left:757.4px;top:595.5px;width:60.1px;height:18.3px;background:#c0c0c0;"></div>
<div class="a fld" style="left:816.5px;top:595.5px;width:60.3px;height:18.3px;background:#c0c0c0;"></div>
<div class="a fld" style="left:887.6px;top:401.0px;width:96.1px;height:18.2px;background:#e6e2e0;"></div>
<div class="a chk" style="left:993.0px;top:386.4px;width:10.6px;height:10.6px;"></div>
<div class="a chk" style="left:993.0px;top:404.6px;width:10.6px;height:10.6px;"></div>
<div class="a btn" style="left:1099.5px;top:401.3px;width:60.5px;height:14.7px;background:#ffffc0;"></div>
<div class="a cmb" style="left:887.6px;top:430.5px;width:192.6px;height:18.0px;background:#c4fafa;"></div>
<div class="a gbtn" style="left:1066.4px;top:431.8px;width:12.6px;height:15.4px;"></div>
<svg style="left:1069.5px;top:438.3px" width="6.4" height="3.4" viewBox="0 0 7 4"><path d="M0 0h7L3.5 4z" fill="#000"/></svg>
<div class="a fld" style="left:887.6px;top:462.7px;width:193.6px;height:18.0px;background:#fff;"></div>
<div class="a cmb" style="left:887.6px;top:495.8px;width:70.2px;height:18.0px;background:#c4fafa;"></div>
<div class="a gbtn" style="left:944.9px;top:497.1px;width:11.7px;height:15.4px;"></div>
<svg style="left:947.5px;top:503.6px" width="6.4" height="3.4" viewBox="0 0 7 4"><path d="M0 0h7L3.5 4z" fill="#000"/></svg>
<div class="a fld" style="left:962.6px;top:495.4px;width:96.4px;height:19.2px;background:#fff;"></div>
<div class="a gbtn" style="left:1036.4px;top:479.0px;width:29.2px;height:18.2px;"></div>
<svg style="left:1043.6px;top:480.8px" width="14.4" height="13.800" viewBox="0 0 30 28"><rect x="0.500" y="0.500" width="29" height="27" fill="#fbf8f4" stroke="#281818" stroke-width="1.600"/><rect x="0" y="0" width="30" height="5.500" fill="#1028c8"/><rect x="11" y="0" width="8" height="1.600" fill="#8090e8"/><path d="M2 9.500h26M2 15h26M2 20.500h26M2 25.500h26" stroke="#d05048" stroke-width="2.200" stroke-dasharray="4.500 2.800" stroke-dashoffset="-1" opacity=".55"/><path d="M0 6.500h30M0 12h30M0 17.500h30M0 23h30M7.800 6v22M15 6v22M22.200 6v22" stroke="#30201c" stroke-width="1.700"/></svg>
<div class="a fld" style="left:1064.4px;top:495.4px;width:95.5px;height:19.2px;background:#fff;"></div>
<div class="a gbtn" style="left:1138.6px;top:479.0px;width:29.3px;height:18.2px;"></div>
<svg style="left:1145.8px;top:480.8px" width="14.4" height="13.800" viewBox="0 0 30 28"><rect x="0.500" y="0.500" width="29" height="27" fill="#fbf8f4" stroke="#281818" stroke-width="1.600"/><rect x="0" y="0" width="30" height="5.500" fill="#1028c8"/><rect x="11" y="0" width="8" height="1.600" fill="#8090e8"/><path d="M2 9.500h26M2 15h26M2 20.500h26M2 25.500h26" stroke="#d05048" stroke-width="2.200" stroke-dasharray="4.500 2.800" stroke-dashoffset="-1" opacity=".55"/><path d="M0 6.500h30M0 12h30M0 17.500h30M0 23h30M7.800 6v22M15 6v22M22.200 6v22" stroke="#30201c" stroke-width="1.700"/></svg>
<div class="a cmb" style="left:887.6px;top:528.8px;width:94.3px;height:18.0px;background:#c4fafa;"></div>
<div class="a gbtn" style="left:968.5px;top:530.1px;width:12.2px;height:15.4px;"></div>
<svg style="left:971.4px;top:536.6px" width="6.4" height="3.4" viewBox="0 0 7 4"><path d="M0 0h7L3.5 4z" fill="#000"/></svg>
<div class="a fld" style="left:993.0px;top:528.0px;width:166.9px;height:19.7px;background:#fff;"></div>
<div class="a fld" style="left:887.6px;top:560.2px;width:83.4px;height:19.4px;background:#fff;"></div>
<div class="a fld" style="left:974.0px;top:560.2px;width:107.2px;height:19.4px;background:#fff;"></div>
<div class="a fld" style="left:887.6px;top:595.3px;width:95.6px;height:19.2px;background:#fff;"></div>
<div class="a gbtn" style="left:970.3px;top:577.5px;width:27.9px;height:18.5px;"></div>
<svg style="left:976.9px;top:579.5px" width="14.4" height="13.800" viewBox="0 0 30 28"><rect x="0.500" y="0.500" width="29" height="27" fill="#fbf8f4" stroke="#281818" stroke-width="1.600"/><rect x="0" y="0" width="30" height="5.500" fill="#1028c8"/><rect x="11" y="0" width="8" height="1.600" fill="#8090e8"/><path d="M2 9.500h26M2 15h26M2 20.500h26M2 25.500h26" stroke="#d05048" stroke-width="2.200" stroke-dasharray="4.500 2.800" stroke-dashoffset="-1" opacity=".55"/><path d="M0 6.500h30M0 12h30M0 17.500h30M0 23h30M7.800 6v22M15 6v22M22.200 6v22" stroke="#30201c" stroke-width="1.700"/></svg>
<div class="a btn" style="left:1005.4px;top:581.8px;width:72.6px;height:35.8px;"></div>
<div class="a btn" style="left:1088.0px;top:581.8px;width:72.4px;height:35.8px;outline:1px solid #000;outline-offset:-1px;border-color:#000;box-shadow:inset 1px 1px 0 #fff, inset -1px -1px 0 #404040, inset -2px -2px 0 #808080"></div>
<div class="a " style="left:1033.2px;top:583.5px;width:16.5px;height:16.1px;background:#c6c2c6;"></div>
<svg style="left:1033.2px;top:583.5px" width="16.5" height="16.1" viewBox="0 0 33 32"><path d="M1.500 2h9l4 4v10h-13z" fill="#58b8e0" stroke="#0c1c60" stroke-width="1.800"/><path d="M4 6.500h7M4 9.500h8M4 12.500h8" stroke="#d8f4ff" stroke-width="1.400"/><path d="M16 7.500h6c4 0 5 2 5 5v3" fill="none" stroke="#000" stroke-width="2.600"/><path d="M21.500 14.500h11L27 21z" fill="#000"/><rect x="14" y="22.500" width="18" height="9" fill="#d0ccd0" stroke="#181818" stroke-width="1.800"/><rect x="18" y="25" width="10" height="3.500" fill="#fff" stroke="#505050" stroke-width=".8"/></svg>
<svg style="left:1111px;top:581px" width="25" height="25" viewBox="0 0 25 25"><defs><linearGradient id="pg" x1="0" y1="0" x2="1" y2="1"><stop offset="0.450" stop-color="#ffffff"/><stop offset="1" stop-color="#b8d0f4"/></linearGradient></defs><rect x="2.200" y="3.200" width="19.600" height="20.200" fill="url(#pg)" stroke="#a0b0d0" stroke-width=".7"/><rect x="6.500" y="2.300" width="10" height="3.200" fill="#dcc88c" stroke="#a89458" stroke-width=".6"/><path d="M4.300 15.700l5.500 5L22.400 5.300" fill="none" stroke="#e01c10" stroke-width="2.500" stroke-linecap="round" stroke-linejoin="miter"/><path d="M4.300 15.200l5 4.600" fill="none" stroke="#e01c10" stroke-width="3.200" stroke-linecap="round"/></svg>
<div class="a " style="left:1161.3px;top:591.0px;width:0.9px;height:5.5px;background:#505050"></div>
<div class="a " style="left:1171.0px;top:81.0px;width:9.0px;height:541.0px;background:#d4d0c8;"></div>
<div class="a " style="left:617.0px;top:621.5px;width:555.0px;height:1.0px;background:#eeeef8;"></div>
<span class="t" style="left:17.4px;top:-0.7px;font-family:'Liberation Sans', sans-serif;font-weight:bold;font-size:10.4px;color:#d4d0c8;transform:scaleX(0.9900)">Aircraft&#x27;s Initializing</span>
<span class="t" style="left:17.6px;top:31.7px;font-family:'Liberation Sans', sans-serif;font-weight:normal;font-size:10.6px;color:#000;transform:scaleX(0.8268)">Close</span>
<span class="t" style="left:71.6px;top:31.7px;font-family:'Liberation Sans', sans-serif;font-weight:normal;font-size:10.6px;color:#000;transform:scaleX(0.8075)">Help</span>
<span class="t" style="left:114.6px;top:31.7px;font-family:'Liberation Sans', sans-serif;font-weight:normal;font-size:10.6px;color:#000;transform:scaleX(0.8762)">Refresh</span>
<span class="t" style="left:406.3px;top:23.2px;font-family:'Liberation Sans', sans-serif;font-weight:bold;font-size:10.2px;color:#000;transform:scaleX(0.9331)">User ID: DEM - Full Control</span>
<span class="t" style="left:19.3px;top:57.7px;font-family:'Liberation Sans', sans-serif;font-weight:bold;font-size:10.2px;color:#000;transform:scaleX(0.9695)">Tasks Initializing</span>
<span class="t" style="left:108.8px;top:57.7px;font-family:'Liberation Sans', sans-serif;font-weight:bold;font-size:10.2px;color:#000;transform:scaleX(0.9652)">Checks Initializing</span>
<span class="t" style="left:224.4px;top:55.9px;font-family:'Liberation Sans', sans-serif;font-weight:bold;font-size:10.2px;color:#000;transform:scaleX(0.9780)">Component&#x27;s Position Initializing</span>
<span class="t" style="left:391.5px;top:57.9px;font-family:'Liberation Sans', sans-serif;font-weight:bold;font-size:10.2px;color:#000;transform:scaleX(0.9387)">EC Initializing</span>
<span class="t" style="left:19.7px;top:79.7px;font-family:'Liberation Sans', sans-serif;font-weight:bold;font-size:10.4px;color:#000;transform:scaleX(0.9763)">Part Effectivity, Maintenance Plan:</span>
<span class="t" style="left:77.0px;top:100.9px;font-family:'Liberation Mono', monospace;font-weight:normal;font-size:10.1px;color:#000;transform:scaleX(0.9905)">Select IPC Position</span>
<span class="t" style="left:588.2px;top:81.6px;font-family:'Liberation Sans', sans-serif;font-weight:normal;font-size:10.4px;color:#000;transform:scaleX(0.8991)">Ext</span>
<span class="t" style="left:19.8px;top:197.0px;font-family:'Liberation Sans', sans-serif;font-weight:bold;font-size:10.4px;color:#000;transform:scaleX(0.9635)">Positions:</span>
<span class="t" style="left:35.6px;top:208.3px;font-family:'Liberation Sans', sans-serif;font-weight:normal;font-size:10.4px;color:#303030;transform:scaleX(1.0018)">Filter IPC Pos.:</span>
<span class="t" style="left:129.0px;top:208.3px;font-family:'Liberation Sans', sans-serif;font-weight:normal;font-size:10.4px;color:#303030;transform:scaleX(1.0118)">Filter Part Eff.:</span>
<span class="t" style="left:225.0px;top:225.2px;font-family:'Liberation Sans', sans-serif;font-weight:bold;font-size:15px;color:#0a5a0a;transform:scaleX(0.9500)">HT</span>
<span class="t" style="left:276.5px;top:224.3px;font-family:'Liberation Sans', sans-serif;font-weight:normal;font-size:13.2px;color:#3c3c3c;transform:scaleX(0.8893)">All:</span>
<span class="t" style="left:335.6px;top:224.3px;font-family:'Liberation Sans', sans-serif;font-weight:normal;font-size:13.2px;color:#3c3c3c;transform:scaleX(0.9956)">Initialized:</span>
<span class="t" style="left:441.0px;top:206.3px;font-family:'Liberation Sans', sans-serif;font-weight:normal;font-size:13.2px;color:#3c3c3c;transform:scaleX(1.0104)">Not Effective:</span>
<span class="t" style="left:441.0px;top:224.3px;font-family:'Liberation Sans', sans-serif;font-weight:normal;font-size:13.2px;color:#3c3c3c;transform:scaleX(0.9960)">Not Initialized:</span>
<span class="t" style="left:582.2px;top:245.7px;font-family:'Liberation Sans', sans-serif;font-weight:bold;font-size:14px;color:#000;transform:scaleX(0.9282)">&lt;</span>
<span class="t" style="left:582.2px;top:281.2px;font-family:'Liberation Sans', sans-serif;font-weight:bold;font-size:14px;color:#000;transform:scaleX(0.9282)">&gt;</span>
<span class="t" style="left:27.5px;top:606.5px;font-family:'Liberation Sans', sans-serif;font-weight:normal;font-size:10.2px;color:#202020;transform:scaleX(0.8989)">Found 286 Positions</span>
<span class="t" style="left:621.0px;top:13.9px;font-family:'Liberation Sans', sans-serif;font-weight:bold;font-size:10.4px;color:#000068;transform:scaleX(0.9803)">Selected Aircraft for Initializing:</span>
<span class="t" style="left:641.5px;top:26.5px;font-family:'Liberation Sans', sans-serif;font-weight:normal;font-size:10.4px;color:#303030;transform:scaleX(0.9844)">AC Reg.:</span>
<span class="t" style="left:727.0px;top:26.5px;font-family:'Liberation Sans', sans-serif;font-weight:normal;font-size:10.4px;color:#303030;transform:scaleX(0.9666)">AC SN:</span>
<span class="t" style="left:800.5px;top:26.5px;font-family:'Liberation Sans', sans-serif;font-weight:normal;font-size:10.4px;color:#303030;transform:scaleX(0.9816)">Code ICAO:</span>
<span class="t" style="left:942.0px;top:26.5px;font-family:'Liberation Sans', sans-serif;font-weight:normal;font-size:10.4px;color:#303030;transform:scaleX(1.0201)">Operator Name:</span>
<span class="t" style="left:1123.0px;top:26.5px;font-family:'Liberation Sans', sans-serif;font-weight:normal;font-size:10.4px;color:#303030;transform:scaleX(0.9853)">STA:</span>
<span class="t" style="left:828.5px;top:58.3px;font-family:'Liberation Sans', sans-serif;font-weight:normal;font-size:10.4px;color:#303030;transform:scaleX(0.9053)">AMP:</span>
<span class="t" style="left:627.6px;top:40.3px;font-family:'Liberation Sans', sans-serif;font-weight:bold;font-size:11px;color:#fff;transform:scaleX(0.9553)">RA-00004</span>
<span class="t" style="left:729.0px;top:39.7px;font-family:'Liberation Sans', sans-serif;font-weight:bold;font-size:11px;color:#000;transform:scaleX(0.9806)">37088</span>
<span class="t" style="left:810.5px;top:39.7px;font-family:'Liberation Sans', sans-serif;font-weight:bold;font-size:11px;color:#000;transform:scaleX(0.9017)">DRU</span>
<span class="t" style="left:863.5px;top:39.7px;font-family:'Liberation Sans', sans-serif;font-weight:bold;font-size:11px;color:#000;transform:scaleX(0.8783)">AIR COMPANY</span>
<span class="t" style="left:1123.5px;top:39.7px;font-family:'Liberation Sans', sans-serif;font-weight:bold;font-size:11px;color:#000;transform:scaleX(0.9318)">MJZ</span>
<span class="t" style="left:631.5px;top:59.0px;font-family:'Liberation Sans', sans-serif;font-weight:bold;font-size:11px;color:#000;transform:scaleX(0.9332)">09-Nov-2009</span>
<span class="t" style="left:722.5px;top:59.0px;font-family:'Liberation Sans', sans-serif;font-weight:bold;font-size:11px;color:#000;transform:scaleX(0.9146)">B737-NG</span>
<span class="t" style="left:863.5px;top:59.0px;font-family:'Liberation Sans', sans-serif;font-weight:bold;font-size:11px;color:#000068;transform:scaleX(0.9188)">4; Rev.: 15; Date: 09-Mar-2022</span>
<span class="t" style="left:622.8px;top:79.7px;font-family:'Liberation Sans', sans-serif;font-weight:bold;font-size:10.4px;color:#000068;transform:scaleX(0.9556)">Component Initializing Editor:</span>
<span class="t" style="left:627.7px;top:107.0px;font-family:'Liberation Sans', sans-serif;font-weight:normal;font-size:10.6px;color:#303030;transform:scaleX(0.9633)">SELECTED COMPONENT POSITION:</span>
<span class="t" style="left:903.4px;top:103.0px;font-family:'Liberation Sans', sans-serif;font-weight:bold;font-size:11.4px;color:#000;transform:scaleX(0.9809)">New Pos:</span>
<span class="t" style="left:993.0px;top:91.8px;font-family:'Liberation Sans', sans-serif;font-weight:normal;font-size:10.4px;color:#303030;transform:scaleX(1.0018)">Filter IPC Pos.:</span>
<span class="t" style="left:1085.5px;top:91.8px;font-family:'Liberation Sans', sans-serif;font-weight:normal;font-size:10.4px;color:#303030;transform:scaleX(0.9740)">Filter Part Eff.:</span>
<span class="t" style="left:631.3px;top:354.6px;font-family:'Liberation Sans', sans-serif;font-weight:normal;font-size:7.4px;color:#000;transform:scaleX(1.0924)">No Positions were Found !</span>
<span class="t" style="left:622.8px;top:372.7px;font-family:'Liberation Sans', sans-serif;font-weight:bold;font-size:10.4px;color:#000;transform:scaleX(0.9564)">Initializing Data:</span>
<span class="t" style="left:637.8px;top:388.5px;font-family:'Liberation Sans', sans-serif;font-weight:normal;font-size:10.4px;color:#303030;transform:scaleX(0.9883)">A/C Install Date:</span>
<span class="t" style="left:650.5px;top:401.2px;font-family:'Liberation Sans', sans-serif;font-weight:bold;font-size:11px;color:#000068;transform:scaleX(0.9511)">11-Sep-2009</span>
<span class="t" style="left:762.8px;top:388.5px;font-family:'Liberation Sans', sans-serif;font-weight:normal;font-size:10.4px;color:#303030;transform:scaleX(0.9807)">Install  FH:</span>
<span class="t" style="left:838.5px;top:388.5px;font-family:'Liberation Sans', sans-serif;font-weight:normal;font-size:10.4px;color:#303030;transform:scaleX(0.9552)">FC:</span>
<span class="t" style="left:862.6px;top:387.2px;font-family:'Liberation Sans', sans-serif;font-weight:bold;font-size:10px;color:#e02020;transform:scaleX(1.0752)">*</span>
<span class="t" style="left:776.5px;top:401.2px;font-family:'Liberation Sans', sans-serif;font-weight:bold;font-size:11px;color:#000068;transform:scaleX(1.0036)">6.20</span>
<span class="t" style="left:843.0px;top:401.2px;font-family:'Liberation Sans', sans-serif;font-weight:bold;font-size:11px;color:#000068;transform:scaleX(0.9796)">6</span>
<span class="t" style="left:645.5px;top:417.3px;font-family:'Liberation Sans', sans-serif;font-weight:normal;font-size:10.4px;color:#303030;transform:scaleX(1.0043)">A/C Total Date:</span>
<span class="t" style="left:766.5px;top:417.3px;font-family:'Liberation Sans', sans-serif;font-weight:normal;font-size:10.4px;color:#303030;transform:scaleX(0.9981)">Total FH:</span>
<span class="t" style="left:838.5px;top:417.3px;font-family:'Liberation Sans', sans-serif;font-weight:normal;font-size:10.4px;color:#303030;transform:scaleX(0.9552)">FC:</span>
<span class="t" style="left:651.0px;top:430.4px;font-family:'Liberation Sans', sans-serif;font-weight:bold;font-size:11px;color:#000;transform:scaleX(0.9526)">12-Apr-2022</span>
<span class="t" style="left:765.0px;top:430.4px;font-family:'Liberation Sans', sans-serif;font-weight:bold;font-size:11px;color:#000;transform:scaleX(0.9806)">35616.53</span>
<span class="t" style="left:831.5px;top:430.4px;font-family:'Liberation Sans', sans-serif;font-weight:bold;font-size:11px;color:#000;transform:scaleX(0.9806)">14948</span>
<span class="t" style="left:782.0px;top:452.5px;font-family:'Liberation Sans', sans-serif;font-weight:bold;font-size:10.4px;color:#000;transform:scaleX(0.9364)">CALCULATED:</span>
<span class="t" style="left:647.0px;top:455.5px;font-family:'Liberation Sans', sans-serif;font-weight:normal;font-size:10.4px;color:#303030;transform:scaleX(1.0492)">TSI:</span>
<span class="t" style="left:706.0px;top:455.5px;font-family:'Liberation Sans', sans-serif;font-weight:normal;font-size:10.4px;color:#303030;transform:scaleX(1.0386)">CSI:</span>
<span class="t" style="left:654.5px;top:468.2px;font-family:'Liberation Sans', sans-serif;font-weight:bold;font-size:11px;color:#8c8c8c;transform:scaleX(0.9796)">0</span>
<span class="t" style="left:713.5px;top:468.2px;font-family:'Liberation Sans', sans-serif;font-weight:bold;font-size:11px;color:#8c8c8c;transform:scaleX(0.9796)">0</span>
<span class="t" style="left:765.0px;top:468.2px;font-family:'Liberation Sans', sans-serif;font-weight:bold;font-size:11px;color:#000;transform:scaleX(0.9806)">35610.33</span>
<span class="t" style="left:831.5px;top:468.2px;font-family:'Liberation Sans', sans-serif;font-weight:bold;font-size:11px;color:#000;transform:scaleX(0.9806)">14942</span>
<span class="t" style="left:645.5px;top:484.5px;font-family:'Liberation Sans', sans-serif;font-weight:normal;font-size:10.4px;color:#303030;transform:scaleX(0.9505)">TSN:</span>
<span class="t" style="left:704.0px;top:484.5px;font-family:'Liberation Sans', sans-serif;font-weight:normal;font-size:10.4px;color:#303030;transform:scaleX(0.9666)">CSN:</span>
<span class="t" style="left:654.5px;top:498.1px;font-family:'Liberation Sans', sans-serif;font-weight:bold;font-size:11px;color:#000068;transform:scaleX(0.9796)">0</span>
<span class="t" style="left:713.5px;top:498.1px;font-family:'Liberation Sans', sans-serif;font-weight:bold;font-size:11px;color:#000068;transform:scaleX(0.9796)">0</span>
<span class="t" style="left:765.0px;top:498.1px;font-family:'Liberation Sans', sans-serif;font-weight:bold;font-size:11px;color:#000;transform:scaleX(0.9806)">35610.33</span>
<span class="t" style="left:831.5px;top:498.1px;font-family:'Liberation Sans', sans-serif;font-weight:bold;font-size:11px;color:#000;transform:scaleX(0.9806)">14942</span>
<span class="t" style="left:642.0px;top:514.3px;font-family:'Liberation Sans', sans-serif;font-weight:normal;font-size:10.4px;color:#303030;transform:scaleX(1.0074)">TSOH:</span>
<span class="t" style="left:700.0px;top:514.3px;font-family:'Liberation Sans', sans-serif;font-weight:normal;font-size:10.4px;color:#303030;transform:scaleX(1.0176)">CSOH:</span>
<span class="t" style="left:654.5px;top:528.2px;font-family:'Liberation Sans', sans-serif;font-weight:bold;font-size:11px;color:#000068;transform:scaleX(0.9796)">0</span>
<span class="t" style="left:713.5px;top:528.2px;font-family:'Liberation Sans', sans-serif;font-weight:bold;font-size:11px;color:#000068;transform:scaleX(0.9796)">0</span>
<span class="t" style="left:765.0px;top:528.2px;font-family:'Liberation Sans', sans-serif;font-weight:bold;font-size:11px;color:#000;transform:scaleX(0.9806)">35610.33</span>
<span class="t" style="left:831.5px;top:528.2px;font-family:'Liberation Sans', sans-serif;font-weight:bold;font-size:11px;color:#000;transform:scaleX(0.9806)">14942</span>
<span class="t" style="left:646.0px;top:544.3px;font-family:'Liberation Sans', sans-serif;font-weight:normal;font-size:10.4px;color:#303030;transform:scaleX(0.9505)">TSR:</span>
<span class="t" style="left:704.0px;top:544.3px;font-family:'Liberation Sans', sans-serif;font-weight:normal;font-size:10.4px;color:#303030;transform:scaleX(0.9868)">CSR:</span>
<span class="t" style="left:654.5px;top:556.9px;font-family:'Liberation Sans', sans-serif;font-weight:bold;font-size:11px;color:#000068;transform:scaleX(0.9796)">0</span>
<span class="t" style="left:713.5px;top:556.9px;font-family:'Liberation Sans', sans-serif;font-weight:bold;font-size:11px;color:#000068;transform:scaleX(0.9796)">0</span>
<span class="t" style="left:765.0px;top:556.9px;font-family:'Liberation Sans', sans-serif;font-weight:bold;font-size:11px;color:#000;transform:scaleX(0.9806)">35610.33</span>
<span class="t" style="left:831.5px;top:556.9px;font-family:'Liberation Sans', sans-serif;font-weight:bold;font-size:11px;color:#000;transform:scaleX(0.9806)">14942</span>
<span class="t" style="left:643.0px;top:581.9px;font-family:'Liberation Sans', sans-serif;font-weight:normal;font-size:10.4px;color:#303030;transform:scaleX(1.0058)">TAPU:</span>
<span class="t" style="left:701.0px;top:581.9px;font-family:'Liberation Sans', sans-serif;font-weight:normal;font-size:10.4px;color:#303030;transform:scaleX(1.0074)">CAPU:</span>
<span class="t" style="left:654.5px;top:595.4px;font-family:'Liberation Sans', sans-serif;font-weight:bold;font-size:11px;color:#8c8c8c;transform:scaleX(0.9796)">0</span>
<span class="t" style="left:713.5px;top:595.4px;font-family:'Liberation Sans', sans-serif;font-weight:bold;font-size:11px;color:#8c8c8c;transform:scaleX(0.9796)">0</span>
<span class="t" style="left:783.5px;top:595.4px;font-family:'Liberation Sans', sans-serif;font-weight:bold;font-size:11px;color:#8c8c8c;transform:scaleX(0.9796)">0</span>
<span class="t" style="left:842.5px;top:595.4px;font-family:'Liberation Sans', sans-serif;font-weight:bold;font-size:11px;color:#8c8c8c;transform:scaleX(0.9796)">0</span>
<span class="t" style="left:896.5px;top:388.0px;font-family:'Liberation Sans', sans-serif;font-weight:normal;font-size:10.4px;color:#303030;transform:scaleX(0.9960)">A/C Found Date:</span>
<span class="t" style="left:905.0px;top:400.7px;font-family:'Liberation Sans', sans-serif;font-weight:bold;font-size:11px;color:#000;transform:scaleX(0.9332)">09-Nov-2009</span>
<span class="t" style="left:1008.0px;top:384.7px;font-family:'Liberation Sans', sans-serif;font-weight:bold;font-size:10.4px;color:#000;transform:scaleX(0.9715)">Update All Components:</span>
<span class="t" style="left:1008.0px;top:403.0px;font-family:'Liberation Sans', sans-serif;font-weight:bold;font-size:10.4px;color:#a00000;transform:scaleX(0.9554)">Not Effective:</span>
<span class="t" style="left:1115.0px;top:401.4px;font-family:'Liberation Sans', sans-serif;font-weight:normal;font-size:10.4px;color:#000;transform:scaleX(1.0350)">Attach</span>
<span class="t" style="left:974.0px;top:416.7px;font-family:'Liberation Sans', sans-serif;font-weight:normal;font-size:10.4px;color:#303030;transform:scaleX(0.9811)">PN:</span>
<span class="t" style="left:1004.8px;top:417.2px;font-family:'Liberation Sans', sans-serif;font-weight:bold;font-size:10px;color:#e00000;transform:scaleX(1.1264)">*</span>
<span class="t" style="left:889.5px;top:431.3px;font-family:'Liberation Sans', sans-serif;font-weight:bold;font-size:11px;color:#0a0a3c;transform:scaleX(0.9806)">0192837465</span>
<span class="t" style="left:974.0px;top:449.0px;font-family:'Liberation Sans', sans-serif;font-weight:normal;font-size:10.4px;color:#303030;transform:scaleX(0.9811)">SN:</span>
<span class="t" style="left:1004.8px;top:449.7px;font-family:'Liberation Sans', sans-serif;font-weight:bold;font-size:10px;color:#e00000;transform:scaleX(1.1264)">*</span>
<span class="t" style="left:974.5px;top:462.4px;font-family:'Liberation Sans', sans-serif;font-weight:bold;font-size:11px;color:#000;transform:scaleX(0.9804)">123</span>
<span class="t" style="left:894.0px;top:481.4px;font-family:'Liberation Sans', sans-serif;font-weight:normal;font-size:10.4px;color:#303030;transform:scaleX(1.0043)">Condition:</span>
<span class="t" style="left:945.8px;top:482.2px;font-family:'Liberation Sans', sans-serif;font-weight:bold;font-size:10px;color:#e00000;transform:scaleX(1.1264)">*</span>
<span class="t" style="left:889.5px;top:496.6px;font-family:'Liberation Sans', sans-serif;font-weight:bold;font-size:11px;color:#0a0a3c;transform:scaleX(0.9154)">NEW</span>
<span class="t" style="left:963.0px;top:482.0px;font-family:'Liberation Sans', sans-serif;font-weight:normal;font-size:10.4px;color:#303030;transform:scaleX(0.9751)">Cert. Date:</span>
<span class="t" style="left:1023.8px;top:482.2px;font-family:'Liberation Sans', sans-serif;font-weight:bold;font-size:10px;color:#e00000;transform:scaleX(1.1264)">*</span>
<span class="t" style="left:980.5px;top:494.7px;font-family:'Liberation Sans', sans-serif;font-weight:bold;font-size:11px;color:#0a0a3c;transform:scaleX(0.9255)">16-Nov-2009</span>
<span class="t" style="left:1077.0px;top:482.0px;font-family:'Liberation Sans', sans-serif;font-weight:normal;font-size:10.4px;color:#303030;transform:scaleX(0.9412)">MFR. Date:</span>
<span class="t" style="left:1123.2px;top:471.7px;font-family:'Liberation Sans', sans-serif;font-weight:bold;font-size:10px;color:#e00000;transform:scaleX(1.1264)">*</span>
<span class="t" style="left:1081.5px;top:494.7px;font-family:'Liberation Sans', sans-serif;font-weight:bold;font-size:11px;color:#0a0a3c;transform:scaleX(0.9511)">11-Sep-2009</span>
<span class="t" style="left:892.7px;top:515.0px;font-family:'Liberation Sans', sans-serif;font-weight:normal;font-size:10.4px;color:#303030;transform:scaleX(0.9696)">Cert. Type:</span>
<span class="t" style="left:948.8px;top:515.7px;font-family:'Liberation Sans', sans-serif;font-weight:bold;font-size:10px;color:#e00000;transform:scaleX(1.1264)">*</span>
<span class="t" style="left:889.5px;top:529.6px;font-family:'Liberation Sans', sans-serif;font-weight:bold;font-size:11px;color:#0a0a3c;transform:scaleX(0.8449)">C OF C</span>
<span class="t" style="left:1048.6px;top:515.0px;font-family:'Liberation Sans', sans-serif;font-weight:normal;font-size:10.4px;color:#303030;transform:scaleX(1.0023)">Cert. Number:</span>
<span class="t" style="left:1123.2px;top:515.7px;font-family:'Liberation Sans', sans-serif;font-weight:bold;font-size:10px;color:#e00000;transform:scaleX(1.1264)">*</span>
<span class="t" style="left:1067.5px;top:528.7px;font-family:'Liberation Sans', sans-serif;font-weight:bold;font-size:11px;color:#000;transform:scaleX(0.9804)">123</span>
<span class="t" style="left:918.0px;top:546.6px;font-family:'Liberation Sans', sans-serif;font-weight:normal;font-size:10.4px;color:#303030;transform:scaleX(0.9283)">TAG:</span>
<span class="t" style="left:948.8px;top:547.2px;font-family:'Liberation Sans', sans-serif;font-weight:bold;font-size:10px;color:#e00000;transform:scaleX(1.1264)">*</span>
<span class="t" style="left:920.0px;top:560.7px;font-family:'Liberation Sans', sans-serif;font-weight:bold;font-size:11px;color:#0a0a3c;transform:scaleX(0.9804)">123</span>
<span class="t" style="left:984.3px;top:546.6px;font-family:'Liberation Sans', sans-serif;font-weight:normal;font-size:10.4px;color:#303030;transform:scaleX(0.9891)">Approval Refer.:</span>
<span class="t" style="left:1067.3px;top:547.2px;font-family:'Liberation Sans', sans-serif;font-weight:bold;font-size:10px;color:#e00000;transform:scaleX(1.1264)">*</span>
<span class="t" style="left:992.5px;top:560.7px;font-family:'Liberation Sans', sans-serif;font-weight:bold;font-size:11px;color:#0a0a3c;transform:scaleX(0.9402)">EASA.145.032</span>
<span class="t" style="left:887.6px;top:581.5px;font-family:'Liberation Sans', sans-serif;font-weight:normal;font-size:10.4px;color:#303030;transform:scaleX(0.9751)">Major SV Date:</span>
<span class="t" style="left:1029.5px;top:600.0px;font-family:'Liberation Sans', sans-serif;font-weight:normal;font-size:10.6px;color:#000;transform:scaleX(0.9314)">Save</span>
<span class="t" style="left:1104.5px;top:600.0px;font-family:'Liberation Sans', sans-serif;font-weight:normal;font-size:10.6px;color:#000;transform:scaleX(1.0244)">Confirm</span>
<svg style="left:0;top:0" width="1180" height="633" viewBox="0 0 1180 633"><path d="M694 51.3 L809.5 147.5 L783.5 165.5 Z" fill="#0d99f8"/><circle cx="799.3" cy="160.2" r="17.3" fill="#303848"/><circle cx="799.3" cy="160.2" r="16.3" fill="#fff"/><circle cx="799.3" cy="160.2" r="14.6" fill="#0d99f8"/><text x="799.3" y="164.7" text-anchor="middle" font-family="Liberation Sans, sans-serif" font-size="12.6" font-weight="bold" fill="#fff">24</text></svg>
</div>
</body></html>
